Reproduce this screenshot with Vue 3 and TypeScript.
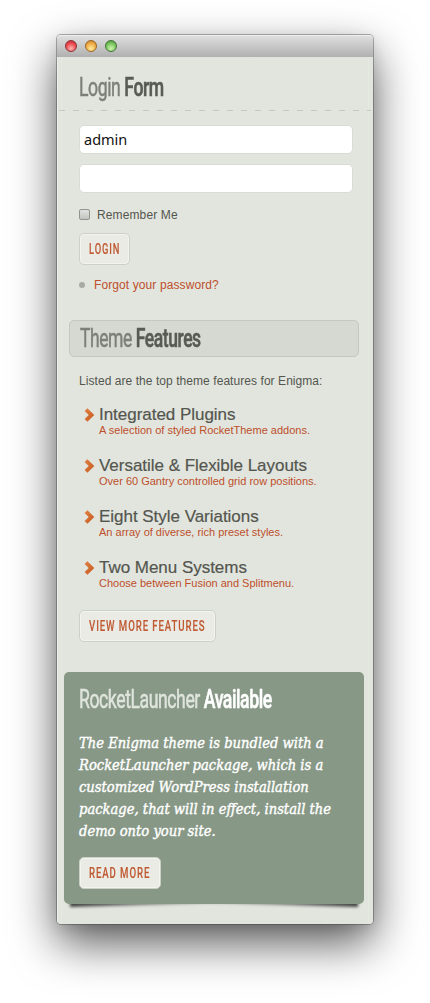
<script setup lang="ts">
import { ref } from 'vue'

interface Feature { title: string; note: string }

const username = ref('admin')
const password = ref('')
const features: Feature[] = [
  { title: 'Integrated Plugins', note: 'A selection of styled RocketTheme addons.' },
  { title: 'Versatile & Flexible Layouts', note: 'Over 60 Gantry controlled grid row positions.' },
  { title: 'Eight Style Variations', note: 'An array of diverse, rich preset styles.' },
  { title: 'Two Menu Systems', note: 'Choose between Fusion and Splitmenu.' },
]
const pitch: string[] = [
  'The Enigma theme is bundled with a',
  'RocketLauncher package, which is a',
  'customized WordPress installation',
  'package, that will in effect, install the',
  'demo onto your site.',
]
</script>

<template>
  <main class="stage">
    <section class="window">
      <header class="titlebar">
        <i class="light red"></i><i class="light amber"></i><i class="light green"></i>
      </header>
      <div class="body">
        <div class="login-head"><h2 class="h login-h">Login <b>Form</b></h2></div>
        <form class="login" @submit.prevent>
          <input v-model="username" class="field" type="text" />
          <input v-model="password" class="field" type="password" />
          <label class="remember"><i class="check"></i><span>Remember Me</span></label>
          <button class="btn login-btn"><span>LOGIN</span></button>
          <a class="forgot"><i></i><span>Forgot your password?</span></a>
        </form>
        <div class="feature-head"><h2 class="h feature-h">Theme <b>Features</b></h2></div>
        <p class="lead">Listed are the top theme features for Enigma:</p>
        <ul class="features">
          <li v-for="f in features" :key="f.title">
            <svg width="11" height="15" viewBox="0 0 11 15">
              <defs>
                <linearGradient id="chev" x1="0" y1="0" x2="1" y2="1">
                  <stop offset="0" stop-color="#e08243" /><stop offset="1" stop-color="#c4581f" />
                </linearGradient>
              </defs>
              <path d="M0.6 3 3.4 0.2 10.3 7 3.4 13.8 0.6 11 4.7 7Z" fill="url(#chev)" />
            </svg>
            <div><h3>{{ f.title }}</h3><small>{{ f.note }}</small></div>
          </li>
        </ul>
        <button class="btn more-btn"><span>VIEW MORE FEATURES</span></button>
        <div class="promo-wrap">
          <article class="promo">
            <h2 class="h promo-h">RocketLauncher <b>Available</b></h2>
            <p><span v-for="line in pitch" :key="line">{{ line }}</span></p>
            <button class="btn read-btn"><span>READ MORE</span></button>
          </article>
        </div>
      </div>
    </section>
  </main>
</template>

<style>
body { background: #fff; }
</style>

<style scoped>
* { box-sizing: border-box; }
.stage {
  width: 430px; height: 1003px; padding: 35px 0 0 57px; overflow: hidden; background: #fff;
  font-family: "Liberation Sans", Arial, sans-serif; color: #54564f;
}
.window {
  width: 316px; height: 889px; border-radius: 4px;
  box-shadow: 0 0 0 1px rgba(60, 60, 60, .4), 0 19px 46px rgba(0, 0, 0, .66), 0 4px 14px rgba(0, 0, 0, .1);
  background: #e2e5de;
}
.titlebar {
  height: 22px; display: flex; align-items: center; gap: 8px; padding: 0 0 2px 8px;
  border-radius: 4px 4px 0 0; border-top: 1px solid #eee;
  background: linear-gradient(#dedede, #b0b0b0);
}
.light { width: 12px; height: 12px; border-radius: 50%; border: 1px solid; }
.red { border-color: #8c3035; background: radial-gradient(circle at 50% 75%, #ffb6b1, #e8444b 60%, #b32e35); }
.amber { border-color: #9c6423; background: radial-gradient(circle at 50% 75%, #ffeb9c, #eda942 60%, #bb7528); }
.green { border-color: #427333; background: radial-gradient(circle at 50% 75%, #cdf7ae, #76c15c 60%, #47883a); }
.body {
  height: 867px; border-radius: 0 0 4px 4px; overflow: hidden;
  background: linear-gradient(90deg, #edefea 0 1px, #e2e5de 1px 4px, #e6e8e2 4px 5px, #e2e5de 5px 311px, #e6e8e2 311px 312px, #e2e5de 312px);
}
h2, h3, p, ul { margin: 0; padding: 0; }
.h {
  font: 400 25px/30px Roboto, sans-serif; letter-spacing: -.6px; white-space: nowrap;
  transform-origin: 0 50%; width: max-content; color: #7d7f78; -webkit-text-stroke: .5px currentColor;
}
.h b { font-weight: 500; color: #585b53; -webkit-text-stroke: .6px currentColor; }
.login-h { transform: scaleX(.705); }
.login-head {
  height: 54px; padding: 16px 0 0 22px;
  background: repeating-linear-gradient(90deg, #c5c8c1 0 6px, transparent 6px 14px) 2px 53px / 312px 1px no-repeat;
}
.login { display: flex; flex-direction: column; align-items: flex-start; padding: 14px 0 0 22px; }
.field {
  width: 274px; height: 29px; margin: 0 0 10px; padding: 0 4px 2px; border: 1px solid #d9dcd5; border-radius: 5px;
  background: #fff; font: 14.5px "Noto Sans", sans-serif; color: #111; outline: none;
}
.remember { display: flex; align-items: center; height: 16px; margin-top: 4px; font-size: 12px; letter-spacing: .12px; }
.check {
  width: 11px; height: 11px; margin: -2px 7px 0 0; border: 1px solid #92958f; border-radius: 2px;
  background: linear-gradient(#e1e2df, #c2c4c0);
}
.btn {
  display: flex; align-items: center; height: 32px; padding: 0 0 0 9px; border: 1px solid #cdd0c8; border-radius: 5px;
  background: #ebebe5; box-shadow: inset 0 0 0 1px #f3f3ef; color: #bf5a33;
  font: 500 15px/30px Roboto, sans-serif; letter-spacing: 1.4px; white-space: nowrap;
  -webkit-text-stroke: .15px currentColor;
}
.btn span { display: block; transform: scaleX(.643); transform-origin: 0 50%; }
.login-btn { width: 51px; margin-top: 10px; }
.login-btn span { transform: scaleX(.625); }
.forgot { display: flex; align-items: center; height: 16px; margin-top: 12px; font-size: 12px; color: #bd4f2b; letter-spacing: .1px; }
.forgot i { width: 6px; height: 6px; margin-right: 9px; border-radius: 50%; background: #a7aaa3; }
.feature-head {
  width: 290px; height: 37px; margin: 27px 0 0 12px; padding: 3px 0 0 10px;
  border: 1px solid #c4c8c0; border-radius: 5px; background: #d6d9d2;
}
.feature-h { transform: scaleX(.7); }
.lead { margin: 16px 0 0 22px; font-size: 12px; line-height: 16px; letter-spacing: .06px; }
.features { list-style: none; padding: 16px 0 0 28px; }
.features li { display: flex; height: 51px; }
.features svg { width: 11px; height: 15px; margin: 3px 4px 0 -1px; }
h3 { font-size: 17px; line-height: 19px; font-weight: 400; letter-spacing: -.03px; -webkit-text-stroke: .2px currentColor; }
small { display: block; font-size: 11px; line-height: 13px; color: #bd4f2b; }
.more-btn { width: 137px; margin: 1px 0 0 22px; }
.promo-wrap { position: relative; z-index: 0; width: 300px; margin: 30px 0 0 7px; }
.promo-wrap::before, .promo-wrap::after {
  content: ""; position: absolute; z-index: -1; bottom: 1px; width: 145px; height: 8px; filter: blur(1.5px);
}
.promo-wrap::before {
  left: 6px; transform-origin: 100% 100%; transform: rotate(-1.6deg);
  background: linear-gradient(90deg, rgba(0, 0, 0, .7), rgba(0, 0, 0, .25));
}
.promo-wrap::after {
  right: 6px; transform-origin: 0 100%; transform: rotate(1.6deg);
  background: linear-gradient(270deg, rgba(0, 0, 0, .7), rgba(0, 0, 0, .25));
}
.promo { height: 232px; padding: 13px 0 0 15px; border-radius: 5px; background: #879886; }
.promo-h { transform: scaleX(.705); color: #dfe5dd; }
.promo-h b { color: #fff; }
.promo p {
  margin: 17px 0 15px; color: #fff; font: italic 14.6px/22px "DejaVu Serif Condensed", "DejaVu Serif", serif;
  -webkit-text-stroke: .4px #fff;
}
.promo p span { display: block; width: max-content; white-space: nowrap; }
.read-btn { width: 82px; }
</style>
